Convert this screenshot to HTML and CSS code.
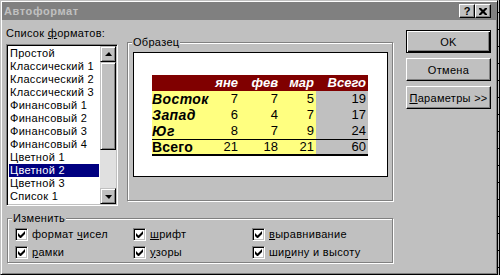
FILE: index.html
```html
<!DOCTYPE html>
<html lang="ru">
<head>
<meta charset="utf-8">
<title>Автоформат</title>
<link rel="stylesheet" href="styles.css">
</head>
<body>
<div class="window">
  <div class="titlebar">
    <span class="title">Автоформат</span>
    <div class="tbtns">
      <span class="tbtn help">?</span>
      <span class="tbtn close"><svg width="8" height="7" viewBox="0 0 8 7"><path d="M0 0h2l2 2 2-2h2v1l-2.5 2.5L8 6v1H6L4 5 2 7H0V6l2.5-2.5L0 1z" fill="#000"/></svg></span>
    </div>
  </div>
  <div class="body">
    <div class="top">
      <div class="leftcol">
        <div class="label">Список <u>ф</u>орматов:</div>
        <div class="listbox">
          <ul class="items">
            <li>Простой</li>
            <li>Классический 1</li>
            <li>Классический 2</li>
            <li>Классический 3</li>
            <li>Финансовый 1</li>
            <li>Финансовый 2</li>
            <li>Финансовый 3</li>
            <li>Финансовый 4</li>
            <li>Цветной 1</li>
            <li class="sel">Цветной 2</li>
            <li>Цветной 3</li>
            <li>Список 1</li>
          </ul>
          <div class="scrollbar">
            <div class="sbtn"><span class="arrow up"></span></div>
            <div class="thumb"></div>
            <div class="track"></div>
            <div class="sbtn"><span class="arrow down"></span></div>
          </div>
        </div>
      </div>
      <div class="group sample">
        <div class="legend">Образец</div>
        <div class="preview">
          <table class="sheet">
            <colgroup><col class="c0"><col class="c1"><col class="c2"><col class="c3"><col class="c4"></colgroup>
            <tr class="head"><th></th><th>яне</th><th>фев</th><th>мар</th><th>Всего</th></tr>
            <tr><td class="lbl">Восток</td><td>7</td><td>7</td><td>5</td><td class="tot">19</td></tr>
            <tr><td class="lbl">Запад</td><td>6</td><td>4</td><td>7</td><td class="tot">17</td></tr>
            <tr class="last"><td class="lbl">Юг</td><td>8</td><td>7</td><td>9</td><td class="tot">24</td></tr>
            <tr class="sum"><td class="lbl">Всего</td><td>21</td><td>18</td><td>21</td><td class="tot">60</td></tr>
          </table>
        </div>
      </div>
      <div class="buttons">
        <div class="btn default"><span>OK</span></div>
        <div class="btn"><span>Отмена</span></div>
        <div class="btn"><span><u>П</u>араметры &gt;&gt;</span></div>
      </div>
    </div>
    <div class="group change">
      <div class="legend">Изменить</div>
      <div class="checks">
        <div class="chk"><span class="box"><svg width="7" height="7" viewBox="0 0 7 7"><path d="M0 2v3l2 2h1l4-4V0L2.5 4.5z" fill="#000"/></svg></span><span>формат <u>ч</u>исел</span></div>
        <div class="chk"><span class="box"><svg width="7" height="7" viewBox="0 0 7 7"><path d="M0 2v3l2 2h1l4-4V0L2.5 4.5z" fill="#000"/></svg></span><span><u>ш</u>рифт</span></div>
        <div class="chk"><span class="box"><svg width="7" height="7" viewBox="0 0 7 7"><path d="M0 2v3l2 2h1l4-4V0L2.5 4.5z" fill="#000"/></svg></span><span><u>в</u>ыравнивание</span></div>
        <div class="chk"><span class="box"><svg width="7" height="7" viewBox="0 0 7 7"><path d="M0 2v3l2 2h1l4-4V0L2.5 4.5z" fill="#000"/></svg></span><span><u>р</u>амки</span></div>
        <div class="chk"><span class="box"><svg width="7" height="7" viewBox="0 0 7 7"><path d="M0 2v3l2 2h1l4-4V0L2.5 4.5z" fill="#000"/></svg></span><span><u>у</u>зоры</span></div>
        <div class="chk"><span class="box"><svg width="7" height="7" viewBox="0 0 7 7"><path d="M0 2v3l2 2h1l4-4V0L2.5 4.5z" fill="#000"/></svg></span><span>ши<u>р</u>ину и высоту</span></div>
      </div>
    </div>
  </div>
</div>
<div class="edge"></div>
</body>
</html>
```

FILE: styles.css
```css
* { box-sizing: border-box; }
html, body { margin: 0; padding: 0; }
body {
  width: 500px;
  height: 275px;
  overflow: hidden;
  display: flex;
  background: #c0c0c0;
  font-family: "Liberation Sans", Arial, sans-serif;
  font-size: 11px;
  letter-spacing: 0.3px;
  color: #000;
}
u { text-decoration: underline; text-underline-offset: 1px; }

.window {
  width: 498px;
  height: 275px;
  flex: none;
  border: 1px solid;
  border-color: #c0c0c0 #000 #000 #c0c0c0;
  box-shadow: inset 1px 1px #fff, inset -1px -1px #808080;
  padding: 1px;
  background: #c0c0c0;
}
.edge {
  flex: 1;
  border-right: 1px solid #000;
  background: repeating-linear-gradient(to bottom, #c0c0c0 0 12px, #000 12px 13px, #c0c0c0 13px 17px);
}

.titlebar {
  height: 18px;
  background: #808080;
  display: flex;
  align-items: center;
  justify-content: space-between;
  padding: 0 5px 0 2px;
}
.title {
  color: #c0c0c0;
  font-weight: bold;
  font-size: 11px;
  letter-spacing: 0.6px;
}
.tbtns { display: flex; }
.tbtn {
  width: 16px;
  height: 14px;
  background: #c0c0c0;
  border: 1px solid;
  border-color: #fff #000 #000 #fff;
  box-shadow: inset -1px -1px #808080;
  display: flex;
  align-items: center;
  justify-content: center;
  font-weight: bold;
  font-size: 11px;
  line-height: 1;
  letter-spacing: 0;
}

.body { padding-left: 4px; }
.top { display: flex; align-items: flex-start; height: 186px; }

.leftcol { width: 112px; padding-top: 7px; }
.label { line-height: 13px; height: 13px; }
.listbox {
  margin-top: 4px;
  width: 112px;
  height: 162px;
  border: 1px solid;
  border-color: #808080 #fff #fff #808080;
  box-shadow: inset 1px 1px #000, inset -1px -1px #c0c0c0;
  padding: 1px;
  background: #fff;
  display: flex;
}
.items {
  list-style: none;
  margin: 0;
  padding: 1px 1px 0 1px;
  flex: 1;
}
.items li {
  height: 13px;
  line-height: 13px;
  padding-left: 1px;
  white-space: nowrap;
}
.items li.sel { background: #000080; color: #fff; }

.scrollbar { width: 16px; display: flex; flex-direction: column; }
.sbtn, .thumb {
  background: #c0c0c0;
  border: 1px solid;
  border-color: #c0c0c0 #000 #000 #c0c0c0;
  box-shadow: inset 1px 1px #fff, inset -1px -1px #808080;
}
.sbtn { height: 16px; display: flex; align-items: center; justify-content: center; }
.thumb { height: 88px; }
.track { flex: 1; background: #e0e0e0; }
.arrow { width: 0; height: 0; border-left: 4px solid transparent; border-right: 3px solid transparent; }
.arrow.up { border-bottom: 4px solid #000; margin-top: -1px; }
.arrow.down { border-top: 4px solid #000; margin-top: 1px; }

.group {
  border: 1px solid #808080;
  box-shadow: inset 1px 1px #fff, 1px 1px #fff;
}
.legend {
  display: table;
  background: #c0c0c0;
  padding: 0 1px;
  line-height: 13px;
  height: 13px;
  margin-top: -7px;
}
.sample {
  margin-left: 9px;
  margin-top: 22px;
  width: 266px;
  height: 159px;
  padding-left: 4px;
}
.preview {
  margin-top: 3px;
  margin-left: 1px;
  width: 255px;
  height: 125px;
  background: #fff;
  border: 1px solid #000;
  padding: 22px 0 0 18px;
}

.sheet {
  border-collapse: separate;
  border-spacing: 0;
  table-layout: fixed;
  width: 216px;
  font-size: 13px;
  letter-spacing: 0;
}
.c0 { width: 52px; }
.c1 { width: 36px; }
.c2 { width: 40px; }
.c3 { width: 36px; }
.c4 { width: 52px; }
.sheet th, .sheet td {
  padding: 0 2px 0 0;
  text-align: right;
  height: 16px;
  line-height: 16px;
  white-space: nowrap;
  vertical-align: middle;
  background: #ffff80;
}
.sheet .head th {
  background: #800000;
  color: #fff;
  font-style: italic;
  font-weight: bold;
}
.sheet td.tot { background: #c0c0c0; }
.sheet td.lbl {
  text-align: left;
  font-weight: bold;
  font-style: italic;
  font-size: 14px;
  letter-spacing: 0.4px;
  padding: 0;
}
.sheet tr.last td { border-bottom: 1px solid #000; height: 17px; }
.sheet tr.sum td { border-bottom: 2px solid #000; height: 16px; line-height: 14px; }
.sheet tr.sum td.lbl { font-style: normal; letter-spacing: 0.2px; }

.buttons { margin-left: 13px; margin-top: 10px; width: 85px; display: flex; flex-direction: column; gap: 5px; }
.btn {
  height: 23px;
  background: #c0c0c0;
  border: 1px solid;
  border-color: #fff #000 #000 #fff;
  box-shadow: inset -1px -1px #808080;
  display: flex;
  align-items: center;
  justify-content: center;
}
.btn.default {
  border-color: #000;
  box-shadow: inset 1px 1px #fff, inset -1px -1px #000, inset -2px -2px #808080;
}

.change {
  margin-top: 12px;
  margin-left: 1px;
  width: 386px;
  height: 45px;
  padding-left: 4px;
}
.checks {
  display: grid;
  grid-template-columns: 118px 119px 1fr;
  grid-auto-rows: 18px;
  margin-top: 3px;
  padding-left: 3px;
}
.chk { display: flex; align-items: center; height: 13px; line-height: 13px; white-space: nowrap; }
.box {
  width: 13px;
  height: 13px;
  flex: none;
  margin-right: 4px;
  background: #fff;
  border: 1px solid;
  border-color: #808080 #fff #fff #808080;
  box-shadow: inset 1px 1px #000, inset -1px -1px #c0c0c0;
  display: flex;
  align-items: center;
  justify-content: center;
}
```
